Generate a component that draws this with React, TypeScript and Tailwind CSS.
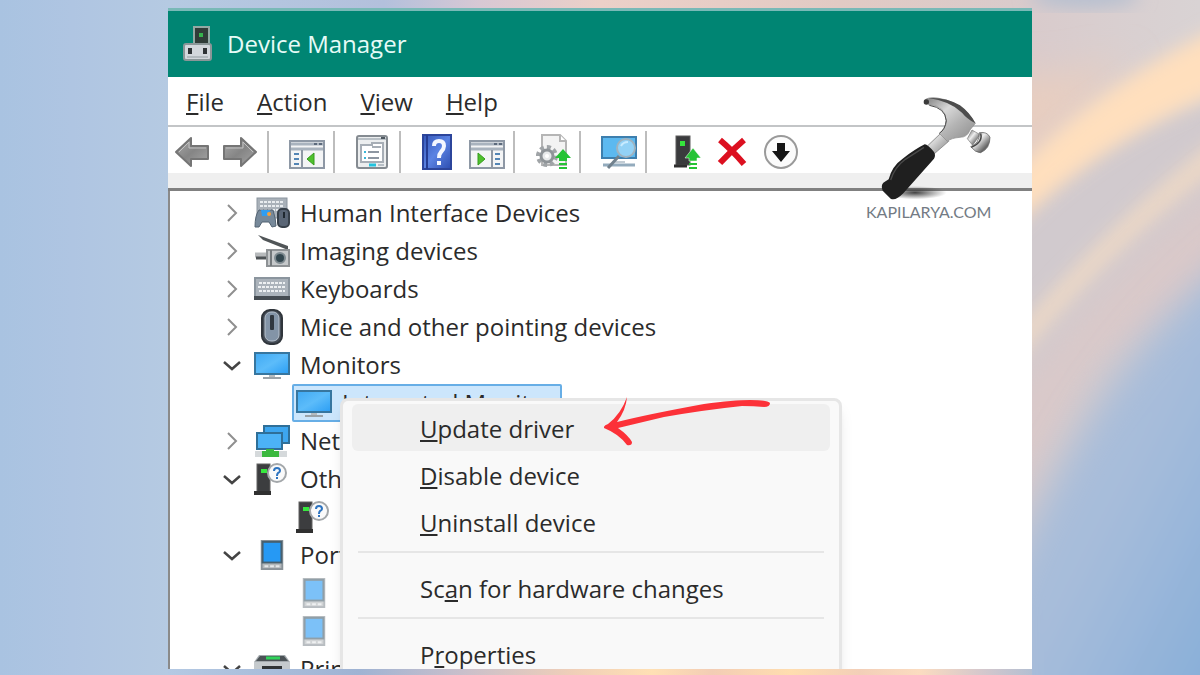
import React from "react";

type IconProps = { className?: string };

const Backdrop = () => (
  <svg
    className="absolute inset-0 h-full w-full"
    viewBox="0 0 1200 675"
    preserveAspectRatio="none"
    aria-hidden="true"
  >
    <defs>
      <linearGradient id="sky" x1="0" x2="1" y1="0" y2="0">
        <stop offset="0" stopColor="#a9c3e1" />
        <stop offset=".06" stopColor="#afc5e2" />
        <stop offset=".14" stopColor="#b5cae2" />
        <stop offset=".32" stopColor="#b3c0dc" />
        <stop offset=".4" stopColor="#d8c8d4" />
        <stop offset=".5" stopColor="#ecd0c8" />
        <stop offset=".7" stopColor="#e2cac4" />
        <stop offset=".86" stopColor="#d9cbcc" />
        <stop offset="1" stopColor="#d9d3d4" />
      </linearGradient>
      <linearGradient id="deep" x1="0" x2="1" y1="0" y2="1">
        <stop offset="0" stopColor="#b4c2d8" />
        <stop offset=".5" stopColor="#a6bcda" />
        <stop offset="1" stopColor="#7ba9d8" />
      </linearGradient>
      <linearGradient id="floor" x1="0" x2="1" y1="0" y2="0">
        <stop offset="0" stopColor="#b4c9e3" />
        <stop offset=".22" stopColor="#9fb3d3" />
        <stop offset=".34" stopColor="#c9bfcb" />
        <stop offset=".47" stopColor="#f0cfb8" />
        <stop offset=".56" stopColor="#ffe0b4" />
        <stop offset=".63" stopColor="#f3cdb5" />
        <stop offset=".72" stopColor="#ffddaf" />
        <stop offset=".8" stopColor="#f3cfb8" />
        <stop offset=".87" stopColor="#fbdcc0" />
        <stop offset=".94" stopColor="#d6c8cc" />
        <stop offset="1" stopColor="#b3bfd2" />
      </linearGradient>
      <filter id="soft" x="-20%" y="-20%" width="140%" height="140%">
        <feGaussianBlur stdDeviation="9" />
      </filter>
      <filter id="softer" x="-30%" y="-30%" width="160%" height="160%">
        <feGaussianBlur stdDeviation="18" />
      </filter>
    </defs>
    <rect width="1200" height="675" fill="url(#sky)" />
    <ellipse cx="1085" cy="-4" rx="55" ry="12" fill="#b5bfd0" filter="url(#soft)" />
    <path d="M1000 75H1060L1130 60L1060 130L1000 180Z" fill="#e8cec0" filter="url(#softer)" />
    <path d="M1000 235Q1110 120 1240 90V600H1000Z" fill="#d1cace" filter="url(#soft)" />
    <path d="M1000 188Q1090 85 1240 18V85Q1110 130 1000 240Z" fill="#ffdfbd" filter="url(#soft)" />
    <path d="M1000 350Q1110 220 1240 120V155Q1110 245 1000 385Z" fill="#ecd8c6" filter="url(#soft)" />
    <path d="M1000 410Q1110 270 1240 170V270L1090 370L1000 550Z" fill="#dac9c9" filter="url(#softer)" />
    <path d="M1000 600Q1090 360 1260 235V740H1000Z" fill="url(#deep)" filter="url(#softer)" />
    <rect x="168" y="664" width="864" height="11" fill="url(#floor)" />
  </svg>
);

const AppIcon = () => (
  <svg viewBox="0 0 32 36" className="h-9 w-8 shrink-0" aria-hidden="true">
    <rect x="12" y="1" width="15" height="19" fill="#303c38" stroke="#93a9a4" strokeWidth="2" />
    <rect x="17" y="7" width="4" height="4" fill="#37b24d" />
    <rect x="2" y="18" width="27" height="16" rx="2" fill="#d3d7dc" stroke="#8b9698" strokeWidth="2" />
    <path d="M5 31H26" stroke="#b3babf" strokeWidth="2" />
    <rect x="6" y="22" width="4" height="6" fill="#2f3336" />
    <rect x="21" y="22" width="4" height="6" fill="#2f3336" />
  </svg>
);

const BackIcon = () => (
  <svg viewBox="0 0 36 32" className="h-8 w-9" aria-hidden="true">
    <defs>
      <linearGradient id="steel" x1="0" x2="1" y1="0" y2="1">
        <stop offset="0" stopColor="#aaa" />
        <stop offset=".5" stopColor="#858585" />
        <stop offset="1" stopColor="#a6a6a6" />
      </linearGradient>
    </defs>
    <path d="M2 16L17 2V10H34V23H17V30Z" fill="url(#steel)" stroke="#757575" strokeWidth="2" strokeLinejoin="round" />
    <path d="M5 16L15 6V12H32" fill="none" stroke="#c2c2c2" />
  </svg>
);

const ForwardIcon = () => (
  <svg viewBox="0 0 36 32" className="h-8 w-9" aria-hidden="true">
    <path d="M34 16L19 2V10H2V23H19V30Z" fill="url(#steel)" stroke="#757575" strokeWidth="2" strokeLinejoin="round" />
    <path d="M31 16L21 6V12H4" fill="none" stroke="#c2c2c2" />
  </svg>
);

const PaneLeftIcon = () => (
  <svg viewBox="0 0 36 30" className="h-[30px] w-9" aria-hidden="true">
    <rect x="1" y="2" width="34" height="27" fill="#f4f5f6" stroke="#8e98a5" strokeWidth="2" />
    <path d="M2 5H34M2 10H34" stroke="#a9b3be" strokeWidth="3" />
    <path d="M25 5H28M30 5H33" stroke="#5c6a7c" strokeWidth="2" />
    <path d="M13 11V29" stroke="#8e98a5" strokeWidth="2" />
    <path d="M5 15H10M5 20H10M5 25H10" stroke="#5385b5" strokeWidth="2" />
    <path d="M25 14V26L18 20Z" fill="#4fc12d" stroke="#369b1e" />
  </svg>
);

const PaneRightIcon = () => (
  <svg viewBox="0 0 36 30" className="h-[30px] w-9" aria-hidden="true">
    <rect x="1" y="2" width="34" height="27" fill="#f4f5f6" stroke="#8e98a5" strokeWidth="2" />
    <path d="M2 5H34M2 10H34" stroke="#a9b3be" strokeWidth="3" />
    <path d="M25 5H28M30 5H33" stroke="#5c6a7c" strokeWidth="2" />
    <path d="M23 11V29" stroke="#8e98a5" strokeWidth="2" />
    <path d="M26 15H31M26 20H31M26 25H31" stroke="#5385b5" strokeWidth="2" />
    <path d="M9 14V26L16 20Z" fill="#4fc12d" stroke="#369b1e" />
  </svg>
);

const PropertiesIcon = () => (
  <svg viewBox="0 0 34 36" className="h-9 w-[34px]" aria-hidden="true">
    <rect x="2" y="2" width="30" height="32" rx="2" fill="#eceeef" stroke="#858b91" strokeWidth="2" />
    <path d="M3 5H31" stroke="#b9c0c6" strokeWidth="2" />
    <path d="M26 4H30" stroke="#4e5860" strokeWidth="2" />
    <path d="M6 11H17V9H28V28H6Z" fill="#fff" stroke="#a7aeb6" strokeWidth="2" />
    <path d="M17 13H26" stroke="#a7aeb6" strokeWidth="2" />
    <path d="M13 18H24M13 24H24" stroke="#8d96a1" strokeWidth="2" />
    <path d="M9 18H11M9 24H11" stroke="#38b6d8" strokeWidth="2" />
    <path d="M14 31H21" stroke="#22c3de" strokeWidth="3" />
    <path d="M23 31H29" stroke="#b7bfc6" strokeWidth="2" />
  </svg>
);

const HelpIcon = () => (
  <svg viewBox="0 0 30 36" className="h-9 w-[30px]" aria-hidden="true">
    <defs>
      <linearGradient id="book" x1="0" x2="1" y1="0" y2="1">
        <stop offset="0" stopColor="#3457b8" />
        <stop offset=".5" stopColor="#5b83e3" />
        <stop offset="1" stopColor="#2c4db0" />
      </linearGradient>
    </defs>
    <rect x="1" y="1" width="28" height="34" fill="url(#book)" stroke="#2c459b" strokeWidth="2" />
    <path d="M5 1V35" stroke="#243c92" strokeWidth="2" />
    <path d="M12 12Q12 7 17 7Q22 7 22 12Q22 15 19 18Q17 20 17 24" fill="none" stroke="#f4f7ff" strokeWidth="4" />
    <rect x="15" y="27" width="4" height="4" fill="#f4f7ff" />
  </svg>
);

const GearFileIcon = () => (
  <svg viewBox="0 0 36 36" className="h-9 w-9" aria-hidden="true">
    <path d="M7 1H25L31 7V31H7Z" fill="#f3f3f3" stroke="#b5b5b5" strokeWidth="2" />
    <path d="M25 1V7H31" fill="#fff" stroke="#b5b5b5" strokeWidth="2" />
    <circle cx="12" cy="22" r="9" fill="none" stroke="#a0a4a7" strokeWidth="4" strokeDasharray="4 3" />
    <circle cx="12" cy="22" r="6" fill="#e8eaeb" stroke="#8f9498" strokeWidth="3" />
    <circle cx="12" cy="22" r="2" fill="#fff" />
    <path d="M28 15L36 24H32V27H24V24H20Z" fill="#26c335" />
    <path d="M24 30H32M24 34H32" stroke="#26c335" strokeWidth="2" />
  </svg>
);

const ScanIcon = () => (
  <svg viewBox="0 0 36 36" className="h-9 w-9" aria-hidden="true">
    <rect x="1" y="3" width="34" height="21" fill="#5cb9f0" stroke="#3d7fae" strokeWidth="2" />
    <path d="M2 31H34" stroke="#93abbd" strokeWidth="3" />
    <path d="M14 28H24" stroke="#c2ccd4" strokeWidth="2" />
    <path d="M18 22L7 34" stroke="#71818d" strokeWidth="3" />
    <circle cx="25" cy="14" r="9" fill="#93d2f6" stroke="#9fb3c0" strokeWidth="2" />
    <path d="M20 12Q22 8 27 8" fill="none" stroke="#c8ebff" strokeWidth="2" />
  </svg>
);

const DriverIcon = () => (
  <svg viewBox="0 0 28 36" className="h-9 w-7" aria-hidden="true">
    <rect x="3" y="2" width="14" height="29" fill="#3a3b3d" stroke="#5c5c5c" />
    <rect x="7" y="7" width="5" height="5" fill="#35e53c" />
    <path d="M1 32H14" stroke="#303030" strokeWidth="3" />
    <path d="M20 14L28 24H24V27H16V24H12Z" fill="#26c335" stroke="#fff" strokeWidth=".5" />
    <path d="M16 30H24M16 34H24" stroke="#26c335" strokeWidth="2" />
  </svg>
);

const RemoveIcon = () => (
  <svg viewBox="0 0 30 30" className="h-[30px] w-[30px]" aria-hidden="true">
    <path d="M3 3Q15 13 27 27M27 3Q14 14 3 26" fill="none" stroke="#dc1020" strokeWidth="6" />
  </svg>
);

const DownIcon = () => (
  <svg viewBox="0 0 36 36" className="h-9 w-9" aria-hidden="true">
    <circle cx="18" cy="18" r="16" fill="#fbfbfb" stroke="#9a9a9a" strokeWidth="2" />
    <path d="M14 9H22V17H27L18 28L9 17H14Z" fill="#151515" />
  </svg>
);

const HidIcon = ({ className }: IconProps) => (
  <svg viewBox="0 0 36 32" className={className} aria-hidden="true">
    <rect x="3" y="1" width="30" height="20" fill="#a9b1b9" stroke="#8b959f" />
    <path d="M6 5H30M6 9H30M6 13H30" stroke="#e8ecef" strokeWidth="2" strokeDasharray="3 1" />
    <path d="M5 13H19Q22 23 22 29L18 30L15 25H8L5 30H1Q1 18 5 13Z" fill="#77899a" stroke="#536372" />
    <path d="M7 13H16L14 19H8Z" fill="#2f9df1" />
    <circle cx="15" cy="17" r="2" fill="#f5a13d" />
    <rect x="24" y="12" width="11" height="18" rx="4" fill="#596575" stroke="#37404a" strokeWidth="2" />
    <path d="M30 15V21" stroke="#1f2830" strokeWidth="2" />
  </svg>
);

const CameraIcon = ({ className }: IconProps) => (
  <svg viewBox="0 0 36 34" className={className} aria-hidden="true">
    <path d="M4 1L34 12V16L9 6Z" fill="#505557" />
    <path d="M1 21H14" stroke="#b7babc" strokeWidth="5" />
    <path d="M2 24H14" stroke="#4e5356" strokeWidth="3" />
    <rect x="13" y="16" width="22" height="16" fill="#c5c8ca" stroke="#8e9295" strokeWidth="2" />
    <path d="M17 16V32" stroke="#74797c" strokeWidth="2" />
    <circle cx="26" cy="24" r="5" fill="#33474f" stroke="#7f8b91" strokeWidth="2" />
  </svg>
);

const KeyboardIcon = ({ className }: IconProps) => (
  <svg viewBox="0 0 36 24" className={className} aria-hidden="true">
    <rect x="1" y="1" width="34" height="19" fill="#abb3bb" stroke="#8b959e" strokeWidth="2" />
    <path d="M5 6H31M4 10H32M5 14H31" stroke="#edf0f2" strokeWidth="2" strokeDasharray="3 1" />
    <rect x="0" y="19" width="36" height="4" fill="#454c52" />
  </svg>
);

const MouseIcon = ({ className }: IconProps) => (
  <svg viewBox="0 0 24 36" className={className} aria-hidden="true">
    <rect x="2" y="1" width="20" height="34" rx="8" fill="#454d57" stroke="#30353b" strokeWidth="2" />
    <rect x="5" y="3" width="14" height="29" rx="6" fill="#8394a7" stroke="#b7c1cc" />
    <rect x="10" y="6" width="4" height="15" rx="1" fill="#30373f" />
  </svg>
);

const MonitorIcon = ({ className }: IconProps) => (
  <svg viewBox="0 0 36 28" className={className} aria-hidden="true">
    <defs>
      <linearGradient id="screen" x1="0" x2="1" y1="0" y2="1">
        <stop offset="0" stopColor="#3fa9f3" />
        <stop offset=".5" stopColor="#5cbcfa" />
        <stop offset="1" stopColor="#2a9df4" />
      </linearGradient>
    </defs>
    <rect x="1" y="2" width="34" height="21" fill="url(#screen)" stroke="#37769f" strokeWidth="2" />
    <path d="M15 25H21" stroke="#b6bcc0" strokeWidth="2" />
    <path d="M9 27H27" stroke="#9aa2a8" strokeWidth="2" />
  </svg>
);

const NetworkIcon = ({ className }: IconProps) => (
  <svg viewBox="0 0 36 34" className={className} aria-hidden="true">
    <rect x="10" y="2" width="25" height="17" fill="#3da6ef" stroke="#2f6f98" strokeWidth="2" />
    <rect x="3" y="9" width="25" height="16" fill="#4cb2f6" stroke="#2f6f98" strokeWidth="2" />
    <rect x="1" y="27" width="32" height="6" fill="#d5d9db" />
    <path d="M12 25H20V27H25V33H8V27H12Z" fill="#3cb93f" />
  </svg>
);

const UnknownIcon = ({ className }: IconProps) => (
  <svg viewBox="0 0 36 36" className={className} aria-hidden="true">
    <rect x="3" y="3" width="13" height="28" fill="#3c3d3f" stroke="#626262" />
    <rect x="7" y="8" width="6" height="4" fill="#37e83e" />
    <path d="M0 32H17" stroke="#303030" strokeWidth="4" />
    <circle cx="23" cy="12" r="9" fill="#fafafa" stroke="#a3a7aa" strokeWidth="2" />
    <path d="M20 10Q20 7 23 7Q26 7 26 10Q26 11 24 12Q23 13 23 15M23 16V18" fill="none" stroke="#2e74c0" strokeWidth="2" />
  </svg>
);

const PortableIcon = ({ className }: IconProps) => (
  <svg viewBox="0 0 24 32" className={className} aria-hidden="true">
    <rect x="1" y="1" width="22" height="30" fill="#b3b8bb" stroke="#8a9298" strokeWidth="2" />
    <rect x="2" y="2" width="20" height="22" fill="#2699f4" stroke="#47606f" strokeWidth="2" />
    <path d="M4 28H20" stroke="#e5e8ea" strokeWidth="2" strokeDasharray="4 2" />
  </svg>
);

const PrinterIcon = ({ className }: IconProps) => (
  <svg viewBox="0 0 36 34" className={className} aria-hidden="true">
    <path d="M5 3H31L36 10V32H0V10Z" fill="#a3a9ad" />
    <path d="M6 4H30L34 9H2Z" fill="#4b5256" />
    <path d="M12 6H26" stroke="#30d35a" strokeWidth="3" />
    <rect x="0" y="10" width="36" height="16" fill="#c5cacd" />
    <rect x="8" y="14" width="20" height="6" fill="#303436" />
  </svg>
);

const Hammer = () => (
  <svg viewBox="60 42 390 324" className="h-[108px] w-[130px] self-end" aria-hidden="true">
    <defs>
      <linearGradient id="claw" x1="0" x2="1" y1="0" y2="1">
        <stop offset="0" stopColor="#7a7a7a" />
        <stop offset=".35" stopColor="#d8d8d8" />
        <stop offset=".6" stopColor="#b5b5b5" />
        <stop offset="1" stopColor="#8a8a8a" />
      </linearGradient>
      <linearGradient id="face" x1="0" x2="1" y1="0" y2="1">
        <stop offset="0" stopColor="#555" />
        <stop offset=".4" stopColor="#eee" />
        <stop offset=".75" stopColor="#666" />
        <stop offset="1" stopColor="#aaa" />
      </linearGradient>
      <radialGradient id="shade">
        <stop offset="0" stopColor="#222" stopOpacity=".85" />
        <stop offset="1" stopColor="#333" stopOpacity="0" />
      </radialGradient>
    </defs>
    <ellipse cx="195" cy="338" rx="95" ry="20" fill="url(#shade)" />
    <path d="M272 160L296 184L252 222L232 198Z" fill="url(#claw)" stroke="#6f6f6f" strokeWidth="2" />
    <path
      d="M222 62Q232 50 262 54Q318 62 352 98Q366 112 376 130L360 150Q352 172 330 172Q304 174 292 184L268 160Q286 148 288 122Q288 78 236 74Z"
      fill="url(#claw)"
      stroke="#888"
      strokeWidth="2"
    />
    <path d="M236 54Q290 52 330 76Q360 98 376 130Q350 116 336 98Q302 64 236 54Z" fill="#4d4d4d" />
    <path d="M238 76Q286 84 289 122Q286 148 268 160" fill="none" stroke="#4a4a4a" strokeWidth="3" />
    <circle cx="229" cy="66" r="8" fill="#3a3a3a" />
    <path d="M366 150L390 164L368 196L352 176Z" fill="url(#face)" stroke="#777" strokeWidth="2" />
    <path d="M388 158Q412 154 420 172Q420 206 392 218Q376 218 362 200Q388 192 388 158Z" fill="url(#face)" stroke="#555" strokeWidth="2" />
    <path d="M392 160Q400 186 364 202" fill="none" stroke="#444" strokeWidth="4" />
    <path d="M224 193Q232 192 252 216Q258 226 252 236L160 340Q136 364 122 356L98 332Q92 316 100 308L116 298Q126 258 158 236Q194 208 224 193Z" fill="#1f1f1f" />
    <path d="M122 300Q134 262 166 238L222 202" fill="none" stroke="#4a4a4a" strokeWidth="4" />
  </svg>
);

const RedArrow = ({ className }: IconProps) => (
  <svg viewBox="0 0 170 54" className={className} aria-hidden="true">
    <path
      d="M23 2Q22 15 13 27Q45 19 100 9Q130 5 146 5Q164 5 166 8Q166 12 160 12Q150 11 138 11Q100 15 60 22L14 33Q24 40 28 47Q28 51 23 50Q15 39 0 33Q-1 31 4 29Q17 19 23 2Z"
      fill="#fc3138"
    />
  </svg>
);

const Chevron = ({ open }: { open: boolean }) =>
  open ? (
    <svg viewBox="0 0 20 20" className="h-5 w-5" aria-hidden="true">
      <path d="M2 7L10 14L18 7" fill="none" stroke="#444" strokeWidth="2.5" />
    </svg>
  ) : (
    <svg viewBox="0 0 20 20" className="h-5 w-5" aria-hidden="true">
      <path d="M6 2L14 10L6 18" fill="none" stroke="#8f8f8f" strokeWidth="2" />
    </svg>
  );

const menus = [
  { key: "F", rest: "ile" },
  { key: "A", rest: "ction" },
  { key: "V", rest: "iew" },
  { key: "H", rest: "elp" },
];

const toolGroups = [
  {
    box: "w-[101px] gap-3 pl-1.5",
    tools: [
      { name: "Back", icon: <BackIcon /> },
      { name: "Forward", icon: <ForwardIcon /> },
    ],
  },
  { box: "w-[66px] pl-5 pt-1", tools: [{ name: "Show console tree", icon: <PaneLeftIcon /> }] },
  { box: "w-[66px] pl-5", tools: [{ name: "Properties", icon: <PropertiesIcon /> }] },
  {
    box: "w-[114px] gap-[17px] pl-[21px]",
    tools: [
      { name: "Help", icon: <HelpIcon /> },
      { name: "Show action pane", icon: <PaneRightIcon /> },
    ],
  },
  { box: "w-[66px] pl-5", tools: [{ name: "Update driver", icon: <GearFileIcon /> }] },
  { box: "w-[66px] pl-5", tools: [{ name: "Scan for hardware changes", icon: <ScanIcon /> }] },
];

const lastTools = [
  { name: "Add driver", icon: <DriverIcon /> },
  { name: "Uninstall device", icon: <RemoveIcon /> },
  { name: "Disable device", icon: <DownIcon /> },
];

type Row = {
  label?: string;
  open?: boolean;
  child?: boolean;
  selected?: boolean;
  icon: React.ReactNode;
};

const rows: Row[] = [
  { label: "Human Interface Devices", open: false, icon: <HidIcon className="h-8 w-9" /> },
  { label: "Imaging devices", open: false, icon: <CameraIcon className="h-[34px] w-9" /> },
  { label: "Keyboards", open: false, icon: <KeyboardIcon className="h-6 w-9" /> },
  { label: "Mice and other pointing devices", open: false, icon: <MouseIcon className="h-9 w-6" /> },
  { label: "Monitors", open: true, icon: <MonitorIcon className="h-7 w-9" /> },
  { label: "Integrated Monitor", child: true, selected: true, icon: <MonitorIcon className="h-7 w-9" /> },
  { label: "Network adapters", open: false, icon: <NetworkIcon className="h-[34px] w-9" /> },
  { label: "Other devices", open: true, icon: <UnknownIcon className="h-9 w-9" /> },
  { child: true, icon: <UnknownIcon className="h-9 w-9" /> },
  { label: "Portable Devices", open: true, icon: <PortableIcon className="h-[30px] w-6" /> },
  { child: true, icon: <PortableIcon className="h-[30px] w-6 opacity-60" /> },
  { child: true, icon: <PortableIcon className="h-[30px] w-6 opacity-60" /> },
  { label: "Print queues", open: true, icon: <PrinterIcon className="h-[34px] w-9" /> },
];

const Key = ({ children }: { children: React.ReactNode }) => (
  <span className="underline decoration-2 underline-offset-2 [text-decoration-skip-ink:none]">{children}</span>
);

const TreeRow = ({ row }: { row: Row }) => {
  const content = (
    <>
      <span className="flex w-10 shrink-0 items-center justify-center">{row.icon}</span>
      {row.label && <span className="whitespace-nowrap">{row.label}</span>}
    </>
  );
  if (row.child) {
    return (
      <li role="treeitem" aria-selected={!!row.selected} className="flex h-[38px] pl-[122px]">
        <span
          className={
            row.selected
              ? "flex w-[270px] items-center gap-2 rounded-xs border-2 border-[#67aee6] bg-[#cce6fc] pr-1"
              : "flex w-[270px] items-center gap-2 border-2 border-transparent pr-1"
          }
        >
          {content}
        </span>
      </li>
    );
  }
  return (
    <li role="treeitem" aria-expanded={row.open} className="flex h-[38px] items-center pl-[52px]">
      <button aria-label={`Toggle ${row.label}`} className="mr-[10px] flex shrink-0">
        <Chevron open={!!row.open} />
      </button>
      <span className="flex items-center gap-2">{content}</span>
    </li>
  );
};

type ItemProps = { before?: string; hot: string; after: string; active?: boolean };

const MenuItem = ({ before = "", hot, after, active = false }: ItemProps) => (
  <button
    role="menuitem"
    className={
      active
        ? "flex h-[47px] w-full items-center rounded-md bg-[#efefef] pb-1 pl-[68px] pt-1.5"
        : "flex h-[47px] w-full items-center rounded-md pb-1 pl-[68px] pt-1.5"
    }
  >
    <span className="whitespace-nowrap">
      {before}
      <Key>{hot}</Key>
      {after}
    </span>
  </button>
);

const MenuRule = () => <hr className="mx-1.5 mb-[11px] mt-1.5 border-t-2 border-[#e6e6e6]" />;

export default function App() {
  return (
    <div className="relative isolate flex h-screen flex-col overflow-hidden px-[14%] pb-1.5 pt-2 font-['Open_Sans','Noto_Sans',sans-serif] text-2xl text-[#2b2b2b]">
      <Backdrop />
      <main className="relative flex min-h-0 flex-1 flex-col overflow-hidden bg-white">
        <header className="flex h-[69px] shrink-0 items-center gap-[13px] border-t-3 border-[#79b9b7] bg-[#008573] pl-[14px] text-[#e6fbf7]">
          <AppIcon />
          <h1>Device Manager</h1>
        </header>

        <nav className="flex h-[50px] shrink-0 items-center gap-[33px] border-b-2 border-[#c3c5c7] pl-[18px] pt-0.5">
          {menus.map((m) => (
            <button key={m.key}>
              <Key>{m.key}</Key>
              {m.rest}
            </button>
          ))}
        </nav>

        <div role="toolbar" className="flex h-[46px] shrink-0 pt-1">
          {toolGroups.map((g, i) => (
            <div key={i} className={`flex shrink-0 items-center border-r-2 border-[#bdbdbd] ${g.box}`}>
              {g.tools.map((t) => (
                <button key={t.name} aria-label={t.name} className={t.name === "Show action pane" ? "pt-1" : ""}>
                  {t.icon}
                </button>
              ))}
            </div>
          ))}
          <div className="flex items-center gap-4 pl-[26px]">
            {lastTools.map((t) => (
              <button key={t.name} aria-label={t.name}>
                {t.icon}
              </button>
            ))}
          </div>
        </div>
        <div className="h-[18px] shrink-0 border-b-3 border-[#808080] bg-[#efefef]" />

        <ul role="tree" className="min-h-0 flex-1 overflow-hidden border-l-2 border-[#8a8a8a] pt-[3px]">
          {rows.map((row, i) => (
            <TreeRow key={i} row={row} />
          ))}
        </ul>

        <div
          role="menu"
          className="absolute left-[172px] top-[390px] w-[502px] rounded-lg border-3 border-[#e6e6e6] bg-[#f9f9f9] px-[9px] pb-3 pt-[3px] shadow-lg"
        >
          <MenuItem hot="U" after="pdate driver" active />
          <MenuItem hot="D" after="isable device" />
          <MenuItem hot="U" after="ninstall device" />
          <MenuRule />
          <MenuItem before="Sc" hot="a" after="n for hardware changes" />
          <MenuRule />
          <MenuItem before="P" hot="r" after="operties" />
          <RedArrow className="absolute -top-1.5 left-[261px] h-[54px] w-[170px]" />
        </div>

        <div className="absolute right-8 top-[86px] flex w-[134px] flex-col items-start gap-0.5">
          <Hammer />
          <span className="font-[Lato,sans-serif] text-base leading-4 text-[#737b84]">KAPILARYA.COM</span>
        </div>
      </main>
    </div>
  );
}
